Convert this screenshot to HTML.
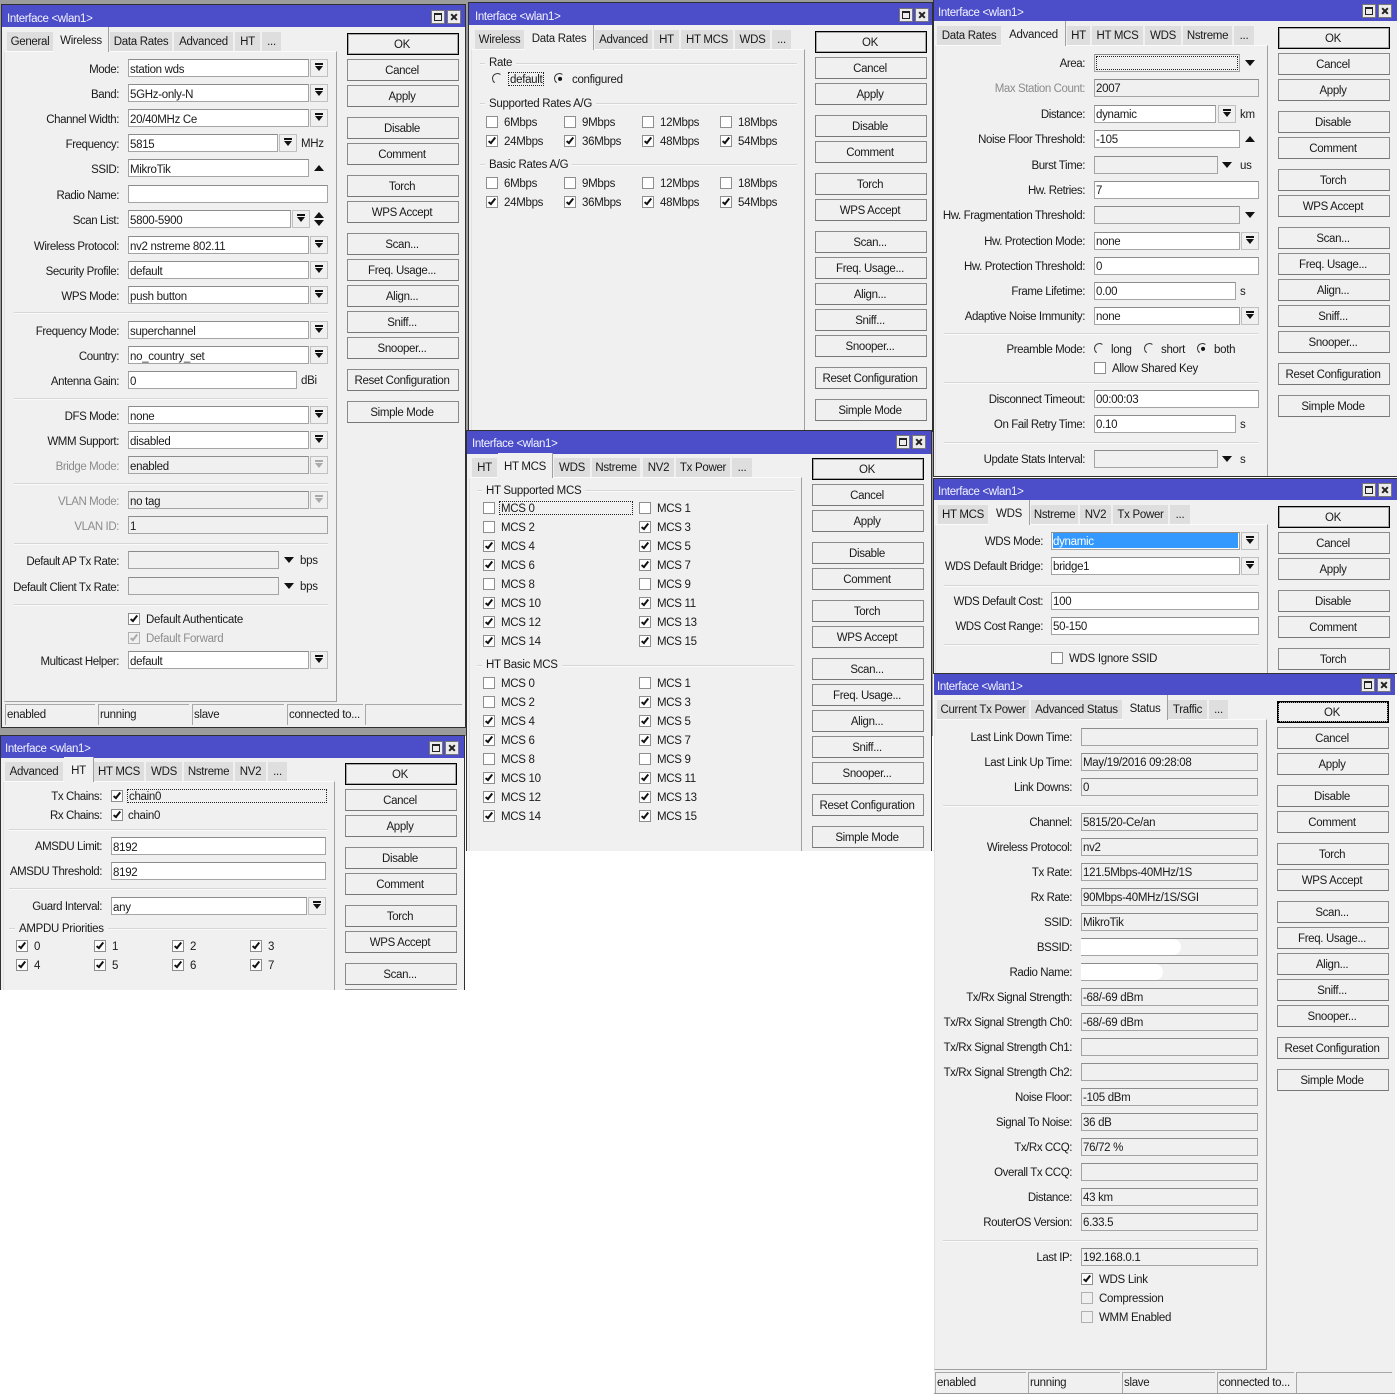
<!DOCTYPE html>
<html><head><meta charset="utf-8"><title>Interface wlan1</title>
<style>
html,body{margin:0;padding:0;background:#fff}
body{position:relative;width:1397px;height:1395px;overflow:hidden;font:11.5px/21px "Liberation Sans",sans-serif;letter-spacing:-.3px;color:#1a1a1a}
.bg{position:absolute;left:0;top:0;width:933px;height:736px;background:#9c9c9c}
.w{position:absolute;background:#f0f0f0;border:1px solid #303030;overflow:hidden;box-sizing:border-box}
.i{position:absolute}
.i span,.i div{position:absolute;box-sizing:border-box;white-space:nowrap}
.bar{height:22px;background:#4b4dc9;color:#f4f4ff;line-height:28px;padding-left:5px;font-size:11.5px;letter-spacing:-.35px}
.ba,.bz{width:14px;height:14px;background:#ececec;border:1px solid #777}
.ba::after{content:"";position:absolute;left:2px;top:2px;width:8px;height:8px;border:1px solid #222;border-top-width:2px;box-sizing:border-box}
.bz::before,.bz::after{content:"";position:absolute;left:2px;top:5px;width:8px;height:2px;background:#222;transform:rotate(45deg)}
.bz::after{transform:rotate(-45deg)}
.p{border:1px solid #a0a0a0;border-left-color:#e2e2e2;border-top-color:#fbfbfb;background:#f0f0f0}
.ts{height:19px;left:0}
.ts span{top:0;height:19px;background:#dedede;text-align:center;line-height:20px;padding:0}
.ts .on{top:-5px;height:25px;background:#f0f0f0;line-height:29px;border-right:1px solid #a0a0a0;z-index:2}
.b{width:112px;height:0}
.b span{left:0;width:112px;height:22px;border:1px solid #8a8a8a;border-bottom-color:#777;background:#f0f0f0;text-align:center;line-height:23px;letter-spacing:-.35px;padding-right:2px}
.b span:nth-child(1){top:0;border:1px solid #000;box-shadow:inset 0 0 0 1px rgba(0,0,0,.3)}
.b span:nth-child(2){top:26px}.b span:nth-child(3){top:52px}.b span:nth-child(4){top:84px}.b span:nth-child(5){top:110px}.b span:nth-child(6){top:142px}.b span:nth-child(7){top:168px}.b span:nth-child(8){top:200px}.b span:nth-child(9){top:226px}.b span:nth-child(10){top:252px}.b span:nth-child(11){top:278px}.b span:nth-child(12){top:304px}.b span:nth-child(13){top:336px}.b span:nth-child(14){top:368px}
.b .foc::after{content:"";position:absolute;left:0;top:0;right:0;bottom:0;border:1px dotted #000}
.r{left:0;height:18px;width:0}
.l{top:0;text-align:right;height:18px;letter-spacing:-.42px}
.f{top:0;height:18px;background:#fff;border:1px solid #a4a4a4;border-top-color:#8c8c8c;padding-left:1px;line-height:20px}
.d{background:#f0f0f0}
.n{color:#8c8c8c}
.x{top:0;width:18px;height:18px;border:1px solid #c0c0c0;background:#f0f0f0}
.x::before{content:"";position:absolute;left:4px;top:3px;width:8px;height:2px;background:#111}
.x::after{content:"";position:absolute;left:4px;top:6px;width:0;height:0;border-left:4px solid transparent;border-right:4px solid transparent;border-top:5px solid #111}
.x.g::before{background:#aaa}.x.g::after{border-top-color:#aaa}
.dn{top:6px;width:0;height:0;border-left:5px solid transparent;border-right:5px solid transparent;border-top:6px solid #111}
.up{top:6px;width:0;height:0;border-left:5px solid transparent;border-right:5px solid transparent;border-bottom:6px solid #111}
.m{top:0;height:18px}
.c{top:3px;width:12px;height:12px;border:1px solid #8e8e8e;background:#fff}
.c.k::after{content:"";position:absolute;left:3px;top:0;width:4px;height:8px;border:solid #111;border-width:0 2px 2px 0;transform:rotate(38deg);box-sizing:border-box}
.c.o{background:#f0f0f0;border-color:#b0b0b0}
.c.k.o::after{border-color:#aaa}
.e{top:3px;width:11px;height:11px;border-radius:50%;border:1px solid;border-color:#333 transparent transparent #333;transform:rotate(-10deg)}
.e.k::after{content:"";position:absolute;left:3px;top:3px;width:4px;height:4px;background:#111;border-radius:50%}
.h{height:1px;background:#d6d6d6;box-shadow:0 1px 0 #fafafa}
.gl{background:#f0f0f0;padding:0 4px;height:18px}
.dot{border:1px dotted #222;height:14px;top:2px;line-height:15px}
.st{top:0;height:21px;border-top:1px solid #a8a8a8;border-left:1px solid #a8a8a8;padding-left:1px;line-height:21px}
.a .l{left:0;width:119px;line-height:23px}.a .f{left:128px;width:181px}.a .x{left:310px}
.cc .l{left:934px;width:151px}.cc .f{left:1094px;width:146px;line-height:18px}.cc .x{left:1241px}
.dd .l{left:0;width:102px}.dd .f{left:111px;width:215px}
.ff .l{left:934px;width:109px}.ff .f{left:1051px;width:208px;line-height:18px}
.gg .l{left:934px;width:138px}.gg .f{left:1081px;width:177px;background:#f0f0f0;line-height:18px}
</style></head><body>
<div class="bg"></div>

<!-- Wireless -->
<div class="w a" style="left:1px;top:4px;width:465px;height:724px"><div class="i" style="left:-2px;top:-5px">
<div class="bar" style="left:2px;top:5px;width:463px">Interface &lt;wlan1&gt;</div>
<div class="ba" style="left:431px;top:10px"></div><div class="bz" style="left:447px;top:10px"></div>
<div class="p" style="left:4px;top:51px;width:333px;height:651px"></div>
<div class="ts" style="top:32px"><span style="left:7px;width:46px">General</span><span class="on" style="left:54px;width:55px">Wireless</span><span style="left:110px;width:62px">Data Rates</span><span style="left:174px;width:59px">Advanced</span><span style="left:235px;width:25px">HT</span><span style="left:262px;width:19px">...</span></div>
<div class="b" style="left:347px;top:33px"><span>OK</span><span>Cancel</span><span>Apply</span><span>Disable</span><span>Comment</span><span>Torch</span><span>WPS Accept</span><span>Scan...</span><span>Freq. Usage...</span><span>Align...</span><span>Sniff...</span><span>Snooper...</span><span>Reset Configuration</span><span>Simple Mode</span></div>
<div class="r" style="top:59px"><span class="l">Mode:</span><span class="f">station wds</span><span class="x"></span></div>
<div class="r" style="top:84px"><span class="l">Band:</span><span class="f">5GHz-only-N</span><span class="x"></span></div>
<div class="r" style="top:109px"><span class="l">Channel Width:</span><span class="f">20/40MHz Ce</span><span class="x"></span></div>
<div class="r" style="top:134px"><span class="l">Frequency:</span><span class="f" style="width:150px">5815</span><span class="x" style="left:279px"></span><span class="m" style="left:301px">MHz</span></div>
<div class="r" style="top:159px"><span class="l">SSID:</span><span class="f">MikroTik</span><span class="up" style="left:314px"></span></div>
<div class="r" style="top:185px"><span class="l">Radio Name:</span><span class="f" style="width:200px"></span></div>
<div class="r" style="top:210px"><span class="l">Scan List:</span><span class="f" style="width:163px">5800-5900</span><span class="x" style="left:292px"></span><span class="up" style="left:314px;top:2px"></span><span class="dn" style="left:314px;top:10px"></span></div>
<div class="r" style="top:236px"><span class="l">Wireless Protocol:</span><span class="f">nv2 nstreme 802.11</span><span class="x"></span></div>
<div class="r" style="top:261px"><span class="l">Security Profile:</span><span class="f">default</span><span class="x"></span></div>
<div class="r" style="top:286px"><span class="l">WPS Mode:</span><span class="f">push button</span><span class="x"></span></div>
<div class="h" style="left:14px;top:312px;width:314px"></div>
<div class="r" style="top:321px"><span class="l">Frequency Mode:</span><span class="f">superchannel</span><span class="x"></span></div>
<div class="r" style="top:346px"><span class="l">Country:</span><span class="f">no_country_set</span><span class="x"></span></div>
<div class="r" style="top:371px"><span class="l">Antenna Gain:</span><span class="f" style="width:169px">0</span><span class="m" style="left:301px">dBi</span></div>
<div class="h" style="left:14px;top:398px;width:314px"></div>
<div class="r" style="top:406px"><span class="l">DFS Mode:</span><span class="f">none</span><span class="x"></span></div>
<div class="r" style="top:431px"><span class="l">WMM Support:</span><span class="f">disabled</span><span class="x"></span></div>
<div class="r" style="top:456px"><span class="l n">Bridge Mode:</span><span class="f d">enabled</span><span class="x g"></span></div>
<div class="h" style="left:14px;top:483px;width:314px"></div>
<div class="r" style="top:491px"><span class="l n">VLAN Mode:</span><span class="f d">no tag</span><span class="x g"></span></div>
<div class="r" style="top:516px"><span class="l n">VLAN ID:</span><span class="f d" style="width:200px">1</span></div>
<div class="h" style="left:14px;top:543px;width:314px"></div>
<div class="r" style="top:551px"><span class="l">Default AP Tx Rate:</span><span class="f d" style="width:151px"></span><span class="dn" style="left:284px"></span><span class="m" style="left:300px">bps</span></div>
<div class="r" style="top:577px"><span class="l">Default Client Tx Rate:</span><span class="f d" style="width:151px"></span><span class="dn" style="left:284px"></span><span class="m" style="left:300px">bps</span></div>
<div class="h" style="left:14px;top:604px;width:314px"></div>
<div class="r" style="top:610px"><span class="c k" style="left:128px"></span><span class="m" style="left:146px">Default Authenticate</span></div>
<div class="r" style="top:629px"><span class="c k o" style="left:128px"></span><span class="m n" style="left:146px">Default Forward</span></div>
<div class="r" style="top:651px"><span class="l">Multicast Helper:</span><span class="f">default</span><span class="x"></span></div>
<div class="r" style="top:704px"><span class="st" style="left:5px;width:90px">enabled</span><span class="st" style="left:98px;width:91px">running</span><span class="st" style="left:192px;width:92px">slave</span><span class="st" style="left:287px;width:76px">connected to...</span><span class="st" style="left:365px;width:97px"></span></div>
</div></div>

<!-- Data Rates -->
<div class="w" style="left:468px;top:2px;width:465px;height:430px"><div class="i" style="left:-469px;top:-3px">
<div class="bar" style="left:469px;top:3px;width:465px;padding-left:6px">Interface &lt;wlan1&gt;</div>
<div class="ba" style="left:899px;top:8px"></div><div class="bz" style="left:915px;top:8px"></div>
<div class="p" style="left:471px;top:49px;width:334px;height:400px"></div>
<div class="ts" style="top:30px"><span style="left:475px;width:49px">Wireless</span><span class="on" style="left:525px;width:69px">Data Rates</span><span style="left:595px;width:57px">Advanced</span><span style="left:654px;width:25px">HT</span><span style="left:681px;width:52px">HT MCS</span><span style="left:735px;width:35px">WDS</span><span style="left:772px;width:19px">...</span></div>
<div class="b" style="left:815px;top:31px"><span>OK</span><span>Cancel</span><span>Apply</span><span>Disable</span><span>Comment</span><span>Torch</span><span>WPS Accept</span><span>Scan...</span><span>Freq. Usage...</span><span>Align...</span><span>Sniff...</span><span>Snooper...</span><span>Reset Configuration</span><span>Simple Mode</span></div>
<div class="h" style="left:480px;top:63px;width:317px"></div><span class="gl" style="left:485px;top:53px">Rate</span>
<div class="r" style="top:70px"><span class="e" style="left:492px"></span><span class="m dot" style="left:508px;width:36px;padding-left:1px">default</span><span class="e k" style="left:554px"></span><span class="m" style="left:572px">configured</span></div>
<div class="h" style="left:480px;top:103px;width:317px"></div><span class="gl" style="left:485px;top:94px">Supported Rates A/G</span>
<div class="r" style="top:113px"><span class="c" style="left:486px"></span><span class="m" style="left:504px">6Mbps</span><span class="c" style="left:564px"></span><span class="m" style="left:582px">9Mbps</span><span class="c" style="left:642px"></span><span class="m" style="left:660px">12Mbps</span><span class="c" style="left:720px"></span><span class="m" style="left:738px">18Mbps</span></div>
<div class="r" style="top:132px"><span class="c k" style="left:486px"></span><span class="m" style="left:504px">24Mbps</span><span class="c k" style="left:564px"></span><span class="m" style="left:582px">36Mbps</span><span class="c k" style="left:642px"></span><span class="m" style="left:660px">48Mbps</span><span class="c k" style="left:720px"></span><span class="m" style="left:738px">54Mbps</span></div>
<div class="h" style="left:480px;top:164px;width:317px"></div><span class="gl" style="left:485px;top:155px">Basic Rates A/G</span>
<div class="r" style="top:174px"><span class="c" style="left:486px"></span><span class="m" style="left:504px">6Mbps</span><span class="c" style="left:564px"></span><span class="m" style="left:582px">9Mbps</span><span class="c" style="left:642px"></span><span class="m" style="left:660px">12Mbps</span><span class="c" style="left:720px"></span><span class="m" style="left:738px">18Mbps</span></div>
<div class="r" style="top:193px"><span class="c k" style="left:486px"></span><span class="m" style="left:504px">24Mbps</span><span class="c k" style="left:564px"></span><span class="m" style="left:582px">36Mbps</span><span class="c k" style="left:642px"></span><span class="m" style="left:660px">48Mbps</span><span class="c k" style="left:720px"></span><span class="m" style="left:738px">54Mbps</span></div>
</div></div>

<!-- HT -->
<div class="w dd" style="left:0;top:735px;width:465px;height:255px;border-bottom:0"><div class="i" style="left:-1px;top:-736px">
<div class="bar" style="left:1px;top:736px;width:463px;padding-left:4px;line-height:27px">Interface &lt;wlan1&gt;</div>
<div class="ba" style="left:429px;top:741px"></div><div class="bz" style="left:445px;top:741px"></div>
<div class="p" style="left:3px;top:781px;width:332px;height:260px"></div>
<div class="ts" style="top:762px"><span style="left:5px;width:58px">Advanced</span><span class="on" style="left:64px;width:30px">HT</span><span style="left:94px;width:50px">HT MCS</span><span style="left:146px;width:36px">WDS</span><span style="left:184px;width:49px">Nstreme</span><span style="left:235px;width:31px">NV2</span><span style="left:268px;width:19px">...</span></div>
<div class="b" style="left:345px;top:763px"><span>OK</span><span>Cancel</span><span>Apply</span><span>Disable</span><span>Comment</span><span>Torch</span><span>WPS Accept</span><span>Scan...</span><span>Freq. Usage...</span><span>Align...</span><span>Sniff...</span><span>Snooper...</span><span>Reset Configuration</span><span>Simple Mode</span></div>
<div class="r" style="top:787px"><span class="l">Tx Chains:</span><span class="c k" style="left:111px"></span><span class="m dot" style="left:127px;width:200px;padding-left:1px">chain0</span></div>
<div class="r" style="top:806px"><span class="l">Rx Chains:</span><span class="c k" style="left:111px"></span><span class="m" style="left:128px">chain0</span></div>
<div class="h" style="left:9px;top:829px;width:318px"></div>
<div class="r" style="top:837px"><span class="l">AMSDU Limit:</span><span class="f">8192</span></div>
<div class="r" style="top:862px"><span class="l">AMSDU Threshold:</span><span class="f">8192</span></div>
<div class="h" style="left:9px;top:888px;width:318px"></div>
<div class="r" style="top:897px"><span class="l">Guard Interval:</span><span class="f" style="width:196px">any</span><span class="x" style="left:308px"></span></div>
<div class="h" style="left:9px;top:928px;width:318px"></div><span class="gl" style="left:15px;top:919px">AMPDU Priorities</span>
<div class="r" style="top:937px"><span class="c k" style="left:16px"></span><span class="m" style="left:34px">0</span><span class="c k" style="left:94px"></span><span class="m" style="left:112px">1</span><span class="c k" style="left:172px"></span><span class="m" style="left:190px">2</span><span class="c k" style="left:250px"></span><span class="m" style="left:268px">3</span></div>
<div class="r" style="top:956px"><span class="c k" style="left:16px"></span><span class="m" style="left:34px">4</span><span class="c k" style="left:94px"></span><span class="m" style="left:112px">5</span><span class="c k" style="left:172px"></span><span class="m" style="left:190px">6</span><span class="c k" style="left:250px"></span><span class="m" style="left:268px">7</span></div>
</div></div>

<!-- Advanced -->
<div class="w cc" style="left:933px;top:-1px;width:466px;height:478px"><div class="i" style="left:-934px;top:0">
<div class="bar" style="left:934px;top:0;width:463px;padding-left:4px;height:21px;line-height:27px">Interface &lt;wlan1&gt;</div>
<div class="ba" style="left:1362px;top:4px"></div><div class="bz" style="left:1378px;top:4px"></div>
<div class="p" style="left:935px;top:45px;width:333px;height:450px"></div>
<div class="ts" style="top:26px"><span style="left:937px;width:64px">Data Rates</span><span class="on" style="left:1002px;width:64px">Advanced</span><span style="left:1067px;width:23px">HT</span><span style="left:1092px;width:51px">HT MCS</span><span style="left:1145px;width:36px">WDS</span><span style="left:1183px;width:49px">Nstreme</span><span style="left:1234px;width:20px">...</span></div>
<div class="b" style="left:1278px;top:27px"><span>OK</span><span>Cancel</span><span>Apply</span><span>Disable</span><span>Comment</span><span>Torch</span><span>WPS Accept</span><span>Scan...</span><span>Freq. Usage...</span><span>Align...</span><span>Sniff...</span><span>Snooper...</span><span>Reset Configuration</span><span>Simple Mode</span></div>
<div class="r" style="top:54px"><span class="l">Area:</span><span class="f d"></span><span class="dot" style="left:1096px;top:2px;width:142px"></span><span class="dn" style="left:1245px"></span></div>
<div class="r" style="top:79px"><span class="l n">Max Station Count:</span><span class="f d" style="width:165px">2007</span></div>
<div class="r" style="top:105px"><span class="l">Distance:</span><span class="f" style="width:122px">dynamic</span><span class="x" style="left:1218px"></span><span class="m" style="left:1240px">km</span></div>
<div class="r" style="top:130px"><span class="l">Noise Floor Threshold:</span><span class="f">-105</span><span class="up" style="left:1245px"></span></div>
<div class="r" style="top:156px"><span class="l">Burst Time:</span><span class="f d" style="width:124px"></span><span class="dn" style="left:1222px"></span><span class="m" style="left:1240px">us</span></div>
<div class="r" style="top:181px"><span class="l">Hw. Retries:</span><span class="f" style="width:165px">7</span></div>
<div class="r" style="top:206px"><span class="l">Hw. Fragmentation Threshold:</span><span class="f d"></span><span class="dn" style="left:1245px"></span></div>
<div class="r" style="top:232px"><span class="l">Hw. Protection Mode:</span><span class="f">none</span><span class="x"></span></div>
<div class="r" style="top:257px"><span class="l">Hw. Protection Threshold:</span><span class="f" style="width:165px">0</span></div>
<div class="r" style="top:282px"><span class="l">Frame Lifetime:</span><span class="f" style="width:142px">0.00</span><span class="m" style="left:1240px">s</span></div>
<div class="r" style="top:307px"><span class="l">Adaptive Noise Immunity:</span><span class="f">none</span><span class="x"></span></div>
<div class="h" style="left:944px;top:333px;width:314px"></div>
<div class="r" style="top:340px"><span class="l">Preamble Mode:</span><span class="e" style="left:1094px"></span><span class="m" style="left:1111px">long</span><span class="e" style="left:1144px"></span><span class="m" style="left:1161px">short</span><span class="e k" style="left:1197px"></span><span class="m" style="left:1214px">both</span></div>
<div class="r" style="top:359px"><span class="c" style="left:1094px"></span><span class="m" style="left:1112px">Allow Shared Key</span></div>
<div class="h" style="left:944px;top:382px;width:314px"></div>
<div class="r" style="top:390px"><span class="l">Disconnect Timeout:</span><span class="f" style="width:165px">00:00:03</span></div>
<div class="r" style="top:415px"><span class="l">On Fail Retry Time:</span><span class="f" style="width:142px">0.10</span><span class="m" style="left:1240px">s</span></div>
<div class="h" style="left:944px;top:442px;width:314px"></div>
<div class="r" style="top:450px"><span class="l">Update Stats Interval:</span><span class="f d" style="width:124px"></span><span class="dn" style="left:1222px"></span><span class="m" style="left:1240px">s</span></div>
</div></div>

<!-- HT MCS -->
<div class="w" style="left:466px;top:430px;width:466px;height:421px;border-bottom:0"><div class="i" style="left:-467px;top:-431px">
<div class="bar" style="left:467px;top:431px;width:465px;padding-left:5px;height:23px;line-height:27px">Interface &lt;wlan1&gt;</div>
<div class="ba" style="left:896px;top:435px"></div><div class="bz" style="left:912px;top:435px"></div>
<div class="p" style="left:469px;top:477px;width:333px;height:400px"></div>
<div class="ts" style="top:458px"><span style="left:472px;width:25px">HT</span><span class="on" style="left:498px;width:55px">HT MCS</span><span style="left:554px;width:36px">WDS</span><span style="left:592px;width:48px">Nstreme</span><span style="left:643px;width:31px">NV2</span><span style="left:676px;width:54px">Tx Power</span><span style="left:732px;width:20px">...</span></div>
<div class="b" style="left:812px;top:458px"><span>OK</span><span>Cancel</span><span>Apply</span><span>Disable</span><span>Comment</span><span>Torch</span><span>WPS Accept</span><span>Scan...</span><span>Freq. Usage...</span><span>Align...</span><span>Sniff...</span><span>Snooper...</span><span>Reset Configuration</span><span>Simple Mode</span></div>
<div class="h" style="left:477px;top:490px;width:317px"></div><span class="gl" style="left:482px;top:481px">HT Supported MCS</span>
<div class="r" style="top:499px"><span class="c" style="left:483px"></span><span class="m dot" style="left:499px;width:134px;padding-left:1px">MCS 0</span><span class="c" style="left:639px"></span><span class="m" style="left:657px">MCS 1</span></div>
<div class="r" style="top:518px"><span class="c" style="left:483px"></span><span class="m" style="left:501px">MCS 2</span><span class="c k" style="left:639px"></span><span class="m" style="left:657px">MCS 3</span></div>
<div class="r" style="top:537px"><span class="c k" style="left:483px"></span><span class="m" style="left:501px">MCS 4</span><span class="c k" style="left:639px"></span><span class="m" style="left:657px">MCS 5</span></div>
<div class="r" style="top:556px"><span class="c k" style="left:483px"></span><span class="m" style="left:501px">MCS 6</span><span class="c k" style="left:639px"></span><span class="m" style="left:657px">MCS 7</span></div>
<div class="r" style="top:575px"><span class="c" style="left:483px"></span><span class="m" style="left:501px">MCS 8</span><span class="c" style="left:639px"></span><span class="m" style="left:657px">MCS 9</span></div>
<div class="r" style="top:594px"><span class="c k" style="left:483px"></span><span class="m" style="left:501px">MCS 10</span><span class="c k" style="left:639px"></span><span class="m" style="left:657px">MCS 11</span></div>
<div class="r" style="top:613px"><span class="c k" style="left:483px"></span><span class="m" style="left:501px">MCS 12</span><span class="c k" style="left:639px"></span><span class="m" style="left:657px">MCS 13</span></div>
<div class="r" style="top:632px"><span class="c k" style="left:483px"></span><span class="m" style="left:501px">MCS 14</span><span class="c k" style="left:639px"></span><span class="m" style="left:657px">MCS 15</span></div>
<div class="h" style="left:477px;top:665px;width:317px"></div><span class="gl" style="left:482px;top:655px">HT Basic MCS</span>
<div class="r" style="top:674px"><span class="c" style="left:483px"></span><span class="m" style="left:501px">MCS 0</span><span class="c" style="left:639px"></span><span class="m" style="left:657px">MCS 1</span></div>
<div class="r" style="top:693px"><span class="c" style="left:483px"></span><span class="m" style="left:501px">MCS 2</span><span class="c k" style="left:639px"></span><span class="m" style="left:657px">MCS 3</span></div>
<div class="r" style="top:712px"><span class="c k" style="left:483px"></span><span class="m" style="left:501px">MCS 4</span><span class="c k" style="left:639px"></span><span class="m" style="left:657px">MCS 5</span></div>
<div class="r" style="top:731px"><span class="c k" style="left:483px"></span><span class="m" style="left:501px">MCS 6</span><span class="c k" style="left:639px"></span><span class="m" style="left:657px">MCS 7</span></div>
<div class="r" style="top:750px"><span class="c" style="left:483px"></span><span class="m" style="left:501px">MCS 8</span><span class="c" style="left:639px"></span><span class="m" style="left:657px">MCS 9</span></div>
<div class="r" style="top:769px"><span class="c k" style="left:483px"></span><span class="m" style="left:501px">MCS 10</span><span class="c k" style="left:639px"></span><span class="m" style="left:657px">MCS 11</span></div>
<div class="r" style="top:788px"><span class="c k" style="left:483px"></span><span class="m" style="left:501px">MCS 12</span><span class="c k" style="left:639px"></span><span class="m" style="left:657px">MCS 13</span></div>
<div class="r" style="top:807px"><span class="c k" style="left:483px"></span><span class="m" style="left:501px">MCS 14</span><span class="c k" style="left:639px"></span><span class="m" style="left:657px">MCS 15</span></div>
</div></div>

<!-- WDS -->
<div class="w ff" style="left:933px;top:478px;width:466px;height:196px"><div class="i" style="left:-934px;top:-479px">
<div class="bar" style="left:934px;top:479px;width:463px;padding-left:4px;height:21px;line-height:27px">Interface &lt;wlan1&gt;</div>
<div class="ba" style="left:1362px;top:483px"></div><div class="bz" style="left:1378px;top:483px"></div>
<div class="p" style="left:935px;top:524px;width:333px;height:200px"></div>
<div class="ts" style="top:505px"><span style="left:938px;width:50px">HT MCS</span><span class="on" style="left:989px;width:41px">WDS</span><span style="left:1031px;width:47px">Nstreme</span><span style="left:1080px;width:31px">NV2</span><span style="left:1113px;width:55px">Tx Power</span><span style="left:1170px;width:20px">...</span></div>
<div class="b" style="left:1278px;top:506px"><span>OK</span><span>Cancel</span><span>Apply</span><span>Disable</span><span>Comment</span><span>Torch</span><span>WPS Accept</span></div>
<div class="r" style="top:532px"><span class="l">WDS Mode:</span><span class="f" style="width:189px"></span><span class="m" style="left:1053px;top:1px;width:185px;height:15px;background:#3399ff;color:#fff;line-height:19px">dynamic</span><span class="x" style="left:1241px"></span></div>
<div class="r" style="top:557px"><span class="l">WDS Default Bridge:</span><span class="f" style="width:189px">bridge1</span><span class="x" style="left:1241px"></span></div>
<div class="h" style="left:944px;top:585px;width:314px"></div>
<div class="r" style="top:592px"><span class="l">WDS Default Cost:</span><span class="f">100</span></div>
<div class="r" style="top:617px"><span class="l">WDS Cost Range:</span><span class="f">50-150</span></div>
<div class="h" style="left:944px;top:644px;width:314px"></div>
<div class="r" style="top:649px"><span class="c" style="left:1051px"></span><span class="m" style="left:1069px">WDS Ignore SSID</span></div>
</div></div>

<!-- Status -->
<div class="w gg" style="left:934px;top:673px;width:461px;height:721px;border-width:1px 0;border-bottom-color:#999"><div class="i" style="left:-934px;top:-674px">
<div class="bar" style="left:934px;top:674px;width:461px;padding-left:3px;height:21px;line-height:27px">Interface &lt;wlan1&gt;</div>
<div class="ba" style="left:1361px;top:678px"></div><div class="bz" style="left:1377px;top:678px"></div>
<div class="p" style="left:934px;top:719px;width:333px;height:651px"></div>
<div class="ts" style="top:700px"><span style="left:937px;width:92px">Current Tx Power</span><span style="left:1031px;width:91px">Advanced Status</span><span class="on" style="left:1123px;width:45px">Status</span><span style="left:1168px;width:39px">Traffic</span><span style="left:1209px;width:19px">...</span></div>
<div class="b" style="left:1277px;top:701px"><span class="foc">OK</span><span>Cancel</span><span>Apply</span><span>Disable</span><span>Comment</span><span>Torch</span><span>WPS Accept</span><span>Scan...</span><span>Freq. Usage...</span><span>Align...</span><span>Sniff...</span><span>Snooper...</span><span>Reset Configuration</span><span>Simple Mode</span></div>
<div class="r" style="top:728px"><span class="l">Last Link Down Time:</span><span class="f"></span></div>
<div class="r" style="top:753px"><span class="l">Last Link Up Time:</span><span class="f">May/19/2016 09:28:08</span></div>
<div class="r" style="top:778px"><span class="l">Link Downs:</span><span class="f">0</span></div>
<div class="h" style="left:943px;top:805px;width:315px"></div>
<div class="r" style="top:813px"><span class="l">Channel:</span><span class="f">5815/20-Ce/an</span></div>
<div class="r" style="top:838px"><span class="l">Wireless Protocol:</span><span class="f">nv2</span></div>
<div class="r" style="top:863px"><span class="l">Tx Rate:</span><span class="f">121.5Mbps-40MHz/1S</span></div>
<div class="r" style="top:888px"><span class="l">Rx Rate:</span><span class="f">90Mbps-40MHz/1S/SGI</span></div>
<div class="r" style="top:913px"><span class="l">SSID:</span><span class="f">MikroTik</span></div>
<div class="r" style="top:938px"><span class="l">BSSID:</span><span class="f"></span><span class="m" style="left:1081px;top:1px;width:100px;height:16px;background:#fff;border-radius:0 8px 8px 0"></span></div>
<div class="r" style="top:963px"><span class="l">Radio Name:</span><span class="f"></span><span class="m" style="left:1081px;top:1px;width:82px;height:16px;background:#fff;border-radius:0 8px 8px 0"></span></div>
<div class="r" style="top:988px"><span class="l">Tx/Rx Signal Strength:</span><span class="f">-68/-69 dBm</span></div>
<div class="r" style="top:1013px"><span class="l">Tx/Rx Signal Strength Ch0:</span><span class="f">-68/-69 dBm</span></div>
<div class="r" style="top:1038px"><span class="l">Tx/Rx Signal Strength Ch1:</span><span class="f"></span></div>
<div class="r" style="top:1063px"><span class="l">Tx/Rx Signal Strength Ch2:</span><span class="f"></span></div>
<div class="r" style="top:1088px"><span class="l">Noise Floor:</span><span class="f">-105 dBm</span></div>
<div class="r" style="top:1113px"><span class="l">Signal To Noise:</span><span class="f">36 dB</span></div>
<div class="r" style="top:1138px"><span class="l">Tx/Rx CCQ:</span><span class="f">76/72 %</span></div>
<div class="r" style="top:1163px"><span class="l">Overall Tx CCQ:</span><span class="f"></span></div>
<div class="r" style="top:1188px"><span class="l">Distance:</span><span class="f">43 km</span></div>
<div class="r" style="top:1213px"><span class="l">RouterOS Version:</span><span class="f">6.33.5</span></div>
<div class="h" style="left:943px;top:1240px;width:315px"></div>
<div class="r" style="top:1248px"><span class="l">Last IP:</span><span class="f">192.168.0.1</span></div>
<div class="r" style="top:1270px"><span class="c k" style="left:1081px"></span><span class="m" style="left:1099px">WDS Link</span></div>
<div class="r" style="top:1289px"><span class="c o" style="left:1081px"></span><span class="m" style="left:1099px">Compression</span></div>
<div class="r" style="top:1308px"><span class="c o" style="left:1081px"></span><span class="m" style="left:1099px">WMM Enabled</span></div>
<div class="r" style="top:1372px"><span class="st" style="left:935px;width:91px">enabled</span><span class="st" style="left:1028px;width:92px">running</span><span class="st" style="left:1122px;width:93px">slave</span><span class="st" style="left:1217px;width:77px">connected to...</span><span class="st" style="left:1296px;width:96px"></span></div>
</div></div>
</body></html>
